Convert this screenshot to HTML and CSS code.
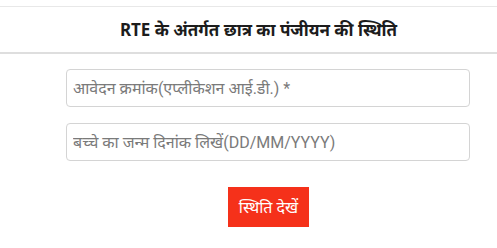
FILE: index.html
```html
<!DOCTYPE html>
<html lang="hi">
<head>
<meta charset="utf-8">
<link rel="stylesheet" href="styles.css">
</head>
<body>
<div class="header">
  <h1 class="title">RTE के अंतर्गत छात्र का पंजीयन की स्थिति</h1>
</div>
<form class="form">
  <input class="field" type="text" placeholder="आवेदन क्रमांक(एप्लीकेशन आई.डी.) *">
  <input class="field field-second" type="text" placeholder="बच्चे का जन्म दिनांक लिखें(DD/MM/YYYY)">
  <div class="actions">
    <button class="btn" type="button">स्थिति देखें</button>
  </div>
</form>
</body>
</html>
```
FILE: styles.css
```css
html, body {
  margin: 0;
  padding: 0;
  background: #fff;
}
body {
  font-family: "Noto Sans", Roboto, "Liberation Sans", sans-serif;
  color: #222;
}
.header {
  margin-top: 6px;
  border-top: 1px solid #e8e8e8;
  border-bottom: 2px solid #dedede;
  height: 45px;
  display: flex;
  align-items: center;
  justify-content: center;
}
.title {
  margin: 0;
  font-size: 17px;
  font-weight: bold;
  color: #1c1c1c;
  padding-left: 20px;
}
.form {
  margin: 15px 0 0 66px;
  width: 404px;
  display: flex;
  flex-direction: column;
}
.field {
  box-sizing: border-box;
  height: 38px;
  width: 100%;
  border: 1px solid #d4d4d4;
  border-radius: 4px;
  padding: 0 6px;
  font-family: Roboto, "Noto Sans", sans-serif;
  font-size: 16px;
  color: #555;
  outline: none;
}
.field::placeholder {
  color: #7a7a7a;
}
.field-second {
  margin-top: 16px;
}
.actions {
  display: flex;
  justify-content: center;
  margin-top: 26px;
}
.btn {
  height: 40px;
  width: 81px;
  border: none;
  background: #f5311a;
  color: #fff;
  font-family: "Noto Sans", sans-serif;
  font-size: 16px;
  padding: 0;
  margin-left: 1px;
}
```
